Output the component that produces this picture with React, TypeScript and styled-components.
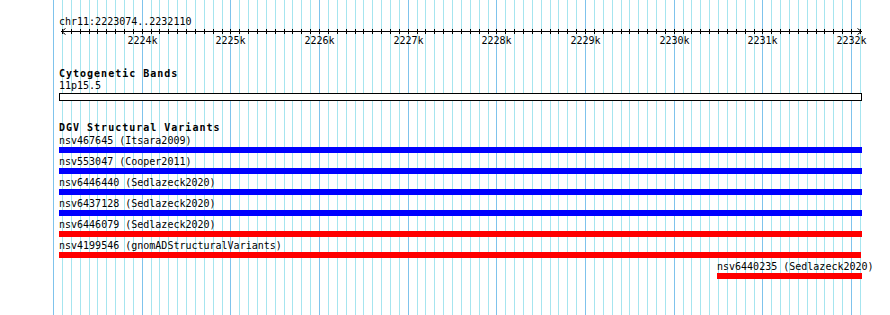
import React from 'react';
import styled, { createGlobalStyle } from 'styled-components';

const VIEW_START = 2223074;
const VIEW_END = 2232110;
const ORIGIN_X = 59.6;
const PX_PER_BP = 0.08867;
const MIN_X = 59;
const MAX_X = 862;

const bpToPx = (bp: number) => ORIGIN_X + (bp - VIEW_START) * PX_PER_BP;
const clampPx = (x: number) => Math.min(MAX_X, Math.max(MIN_X, x));

type TFeature = {
  name: string;
  source: string;
  start: number;
  end: number;
  kind: 'gain' | 'loss';
};

const features: TFeature[] = [
  { name: 'nsv467645', source: 'Itsara2009', start: 2210000, end: 2240000, kind: 'gain' },
  { name: 'nsv553047', source: 'Cooper2011', start: 2200000, end: 2250000, kind: 'gain' },
  { name: 'nsv6446440', source: 'Sedlazeck2020', start: 2215000, end: 2240000, kind: 'gain' },
  { name: 'nsv6437128', source: 'Sedlazeck2020', start: 2215000, end: 2240000, kind: 'gain' },
  { name: 'nsv6446079', source: 'Sedlazeck2020', start: 2215000, end: 2240000, kind: 'loss' },
  { name: 'nsv4199546', source: 'gnomADStructuralVariants', start: 2220000, end: 2232115, kind: 'loss' },
  { name: 'nsv6440235', source: 'Sedlazeck2020', start: 2230488, end: 2240000, kind: 'loss' },
];

const gridPositions: { bp: number; major: boolean }[] = [];
for (let bp = 2223000; bp <= 2232100; bp += 100) {
  gridPositions.push({ bp, major: bp % 1000 === 0 });
}

const inView = (bp: number) => bp > VIEW_START && bp < VIEW_END;
const majorTicks = gridPositions.filter((g) => g.major && inView(g.bp));

const GlobalStyle = createGlobalStyle`
  html, body {
    margin: 0;
    padding: 0;
    background: #ffffff;
  }
  body {
    font-family: 'DejaVu Sans Mono', 'Liberation Mono', monospace;
    font-size: 10px;
    color: #000000;
  }
`;

const PageStyled = styled.div`
  position: relative;
  width: 890px;
  height: 315px;
  overflow: hidden;
  background: #ffffff;
`;

const GridLayer = styled.div`
  position: absolute;
  inset: 0;
  pointer-events: none;
`;

const GridLine = styled.div<{ $major?: boolean }>`
  position: absolute;
  top: 0;
  bottom: 0;
  width: 1px;
  background: ${({ $major }) => ($major ? '#7fc3ec' : '#a6e5ef')};
`;

const ContentStyled = styled.div`
  position: relative;
  display: flex;
  flex-direction: column;
  padding-top: 16px;
`;

const TextLine = styled.div<{ $bold?: boolean }>`
  height: 12px;
  line-height: 12px;
  white-space: nowrap;
  padding-left: 59px;
  font-weight: ${({ $bold }) => ($bold ? 700 : 400)};
  letter-spacing: ${({ $bold }) => ($bold ? '1px' : '0')};
`;

const RulerSvg = styled.svg`
  display: block;
  width: 890px;
  height: 7px;
`;

const TickLabelRow = styled.div`
  position: relative;
  height: 12px;
  line-height: 12px;
`;

const TickLabel = styled.span`
  position: absolute;
  top: 0;
  transform: translateX(-50%);
  white-space: nowrap;
`;

const TrackStyled = styled.section<{ $gap: number }>`
  margin-top: ${({ $gap }) => $gap}px;
`;

const BandRect = styled.div`
  box-sizing: border-box;
  margin: 1px 0 0 59px;
  width: 803px;
  height: 8px;
  border: 1px solid #000000;
  background: #ffffff;
`;

const FeatureList = styled.div`
  display: flex;
  flex-direction: column;
  margin-top: 1px;
`;

const FeatureRow = styled.div`
  display: flex;
  flex-direction: column;
  margin-bottom: 3px;
`;

const FeatureLabel = styled.div`
  height: 12px;
  line-height: 12px;
  white-space: nowrap;
`;

const FeatureBar = styled.div<{ $kind: 'gain' | 'loss' }>`
  height: 6px;
  background: ${({ $kind }) => ($kind === 'gain' ? '#0000ff' : '#ff0000')};
`;

const Ruler = () => {
  const y = 3.5;
  return (
    <RulerSvg viewBox="0 0 890 7">
      <line x1={61} y1={y} x2={862} y2={y} stroke="#000" strokeWidth={1} />
      {gridPositions
        .filter((g) => inView(g.bp))
        .map((g) => {
          const x = Math.round(bpToPx(g.bp)) + 0.5;
          return <line key={g.bp} x1={x} y1={1} x2={x} y2={6} stroke="#000" strokeWidth={1} />;
        })}
      <polyline points="65.5,0.5 61.5,3.5 65.5,6.5" fill="none" stroke="#000" strokeWidth={1} />
      <polyline points="857.5,0.5 861.5,3.5 857.5,6.5" fill="none" stroke="#000" strokeWidth={1} />
    </RulerSvg>
  );
};

const App = () => {
  return (
    <PageStyled>
      <GlobalStyle />
      <GridLayer>
        {gridPositions.map((g) => (
          <GridLine key={g.bp} $major={g.major} style={{ left: Math.round(bpToPx(g.bp)) }} />
        ))}
      </GridLayer>
      <ContentStyled>
        <TextLine>chr11:2223074..2232110</TextLine>
        <Ruler />
        <TickLabelRow>
          {majorTicks.map((g) => (
            <TickLabel key={g.bp} style={{ left: Math.round(bpToPx(g.bp)) + 0.5 }}>
              {g.bp / 1000}k
            </TickLabel>
          ))}
        </TickLabelRow>

        <TrackStyled $gap={21}>
          <TextLine $bold>Cytogenetic Bands</TextLine>
          <TextLine>11p15.5</TextLine>
          <BandRect />
        </TrackStyled>

        <TrackStyled $gap={21}>
          <TextLine $bold>DGV Structural Variants</TextLine>
          <FeatureList>
            {features.map((f) => {
              const left = Math.round(clampPx(bpToPx(f.start)));
              const right = Math.round(clampPx(bpToPx(f.end)));
              return (
                <FeatureRow key={f.name} style={{ marginLeft: left }}>
                  <FeatureLabel>
                    {f.name} ({f.source})
                  </FeatureLabel>
                  <FeatureBar $kind={f.kind} style={{ width: right - left }} />
                </FeatureRow>
              );
            })}
          </FeatureList>
        </TrackStyled>
      </ContentStyled>
    </PageStyled>
  );
};

export default App;
